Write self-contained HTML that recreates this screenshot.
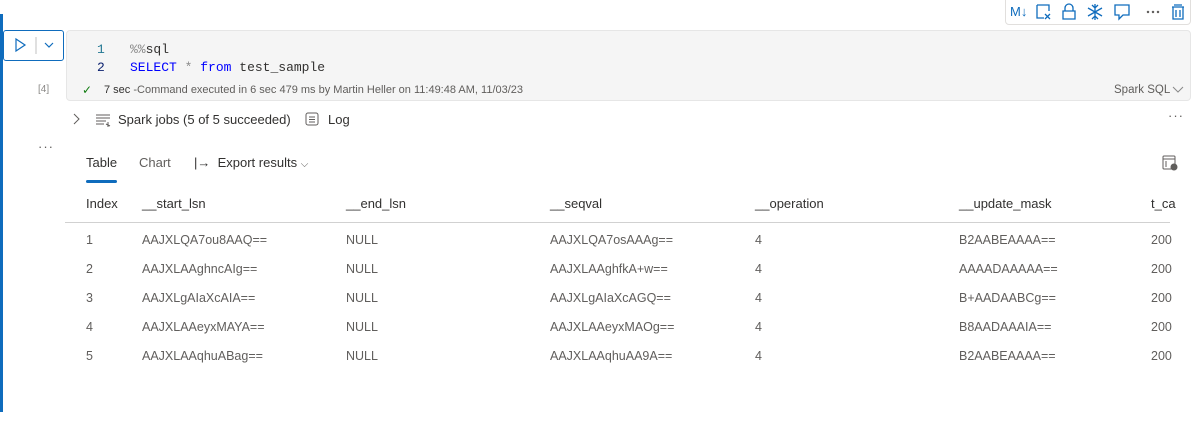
<!DOCTYPE html>
<html><head><meta charset="utf-8"><style>
*{margin:0;padding:0;box-sizing:border-box}
body{width:1200px;height:438px;background:#fff;font-family:"Liberation Sans",sans-serif;position:relative;overflow:hidden;color:#323130}
.a{position:absolute;white-space:nowrap}
.bar{left:0;top:14px;width:3px;height:398px;background:#0f6cbd}
.tb{left:1005px;top:-4px;width:186px;height:29px;border:1px solid #e1dfdd;border-radius:4px;background:#fff}
.run{left:3px;top:30px;width:61px;height:31px;border:1px solid #0f6cbd;border-radius:3px;background:#fff}
.cell{left:66px;top:30px;width:1125px;height:71px;background:#f5f5f5;border:1px solid #e6e6e6;border-radius:4px}
.mono{font-family:"Liberation Mono",monospace;font-size:13px}
.th{font-size:13px;color:#323130;top:196px}
.td{font-size:12.5px;color:#605e5c}
</style></head><body>
<div class="a bar"></div>
<div class="a tb"></div>
<div class="a" style="left:1010px;top:4px;font-size:13px;color:#0f6cbd">M↓</div>
<svg class="a" style="left:1036px;top:2px" width="150" height="20" fill="none" stroke="#0f6cbd" stroke-width="1.3">
<path d="M1 3h12v6M1 3v13h7M9 12l5 5M14 12l-5 5"/>
<path d="M29 9v-3a4 4 0 0 1 8 0v3M27 9h12v8h-12z"/>
<path d="M59 2v16M52 6l14 8M66 6l-14 8M56 3l3 3 3-3M56 17l3-3 3 3"/>
<path d="M79 3h14v10h-6l-4 4v-4h-4z"/>
<circle cx="112" cy="10" r=".6" fill="#605e5c" stroke="#605e5c"/><circle cx="117" cy="10" r=".6" fill="#605e5c" stroke="#605e5c"/><circle cx="122" cy="10" r=".6" fill="#605e5c" stroke="#605e5c"/>
<path d="M138 3h8M136 5h12M137 5v12h10V5M140 8v7M144 8v7"/>
</svg>
<div class="a run"></div>
<svg class="a" style="left:3px;top:30px" width="61" height="31" fill="none" stroke="#0f6cbd" stroke-width="1.2">
<path d="M13 9l9 6-9 6z"/><path d="M33 7v17" stroke="#ccc"/><path d="M42 13l4 4 4-4"/>
</svg>
<div class="a cell"></div>
<div class="a mono" style="left:97px;top:42px;color:#237893">1</div>
<div class="a mono" style="left:97px;top:60px;color:#0b216f">2</div>
<div class="a mono" style="left:130px;top:42px"><span style="color:#888">%%</span>sql</div>
<div class="a mono" style="left:130px;top:60px"><span style="color:#0000ff">SELECT</span> <span style="color:#888">*</span> <span style="color:#0000ff">from</span> test_sample</div>
<div class="a" style="left:38px;top:84px;font-size:10px;color:#8a8886">[4]</div>
<div class="a" style="left:82px;top:83px;font-size:12px;color:#107c10">✓</div>
<div class="a" style="left:104px;top:84px;font-size:11px;color:#605e5c"><span style="color:#323130">7 sec</span> -Command executed in 6 sec 479 ms by Martin Heller on 11:49:48 AM, 11/03/23</div>
<div class="a" style="left:1114px;top:84px;font-size:11.5px;color:#605e5c">Spark SQL</div>
<svg class="a" style="left:1172px;top:86px" width="12" height="8" fill="none" stroke="#888"><path d="M1 1l5 5 5-5"/></svg>
<svg class="a" style="left:72px;top:113px" width="10" height="12" fill="none" stroke="#605e5c"><path d="M2 1l5 5-5 5"/></svg>
<svg class="a" style="left:95px;top:113px" width="18" height="14" fill="none" stroke="#605e5c"><path d="M1 2h14M1 5h14M1 8h10M1 11h8M13 9v5M11 11l4 2"/></svg>
<div class="a" style="left:118px;top:112px;font-size:13px">Spark jobs (5 of 5 succeeded)</div>
<svg class="a" style="left:305px;top:112px" width="14" height="14" fill="none" stroke="#605e5c"><rect x="1" y="1" width="12" height="12" rx="2"/><path d="M4 5h6M4 7.5h6M4 10h6"/></svg>
<div class="a" style="left:328px;top:112px;font-size:13px">Log</div>
<div class="a" style="left:1168px;top:108px;font-size:13px;color:#605e5c;letter-spacing:1px">···</div>
<div class="a" style="left:38px;top:139px;font-size:13px;color:#605e5c;letter-spacing:1px">···</div>
<div class="a" style="left:86px;top:155px;font-size:13px">Table</div>
<div class="a" style="left:86px;top:180px;width:31px;height:3px;background:#0f6cbd;border-radius:2px"></div>
<div class="a" style="left:139px;top:155px;font-size:13px;color:#605e5c">Chart</div>
<div class="a" style="left:194px;top:155px;font-size:13px">|→&nbsp; Export results <span style="font-size:10px;color:#605e5c">⌵</span></div>
<svg class="a" style="left:1162px;top:155px" width="16" height="16" fill="none" stroke="#605e5c"><rect x="1" y="1" width="12" height="13" rx="1"/><path d="M1 4h12M4 6v6"/><circle cx="12" cy="12" r="3" fill="#605e5c"/></svg>
<div class="a th" style="left:86px">Index</div>
<div class="a th" style="left:142px">__start_lsn</div>
<div class="a th" style="left:346px">__end_lsn</div>
<div class="a th" style="left:550px">__seqval</div>
<div class="a th" style="left:755px">__operation</div>
<div class="a th" style="left:959px">__update_mask</div>
<div class="a th" style="left:1151px">t_ca</div>
<div class="a" style="left:65px;top:222px;width:1105px;height:1px;background:#d1d1d1"></div>
<div class="a" style="left:0;top:0;width:1200px">
<div class="a td" style="left:86px;top:233px">1</div><div class="a td" style="left:142px;top:233px">AAJXLQA7ou8AAQ==</div><div class="a td" style="left:346px;top:233px">NULL</div><div class="a td" style="left:550px;top:233px">AAJXLQA7osAAAg==</div><div class="a td" style="left:755px;top:233px">4</div><div class="a td" style="left:959px;top:233px">B2AABEAAAA==</div><div class="a td" style="left:1151px;top:233px">200</div>
<div class="a td" style="left:86px;top:262px">2</div><div class="a td" style="left:142px;top:262px">AAJXLAAghncAIg==</div><div class="a td" style="left:346px;top:262px">NULL</div><div class="a td" style="left:550px;top:262px">AAJXLAAghfkA+w==</div><div class="a td" style="left:755px;top:262px">4</div><div class="a td" style="left:959px;top:262px">AAAADAAAAA==</div><div class="a td" style="left:1151px;top:262px">200</div>
<div class="a td" style="left:86px;top:291px">3</div><div class="a td" style="left:142px;top:291px">AAJXLgAIaXcAIA==</div><div class="a td" style="left:346px;top:291px">NULL</div><div class="a td" style="left:550px;top:291px">AAJXLgAIaXcAGQ==</div><div class="a td" style="left:755px;top:291px">4</div><div class="a td" style="left:959px;top:291px">B+AADAABCg==</div><div class="a td" style="left:1151px;top:291px">200</div>
<div class="a td" style="left:86px;top:320px">4</div><div class="a td" style="left:142px;top:320px">AAJXLAAeyxMAYA==</div><div class="a td" style="left:346px;top:320px">NULL</div><div class="a td" style="left:550px;top:320px">AAJXLAAeyxMAOg==</div><div class="a td" style="left:755px;top:320px">4</div><div class="a td" style="left:959px;top:320px">B8AADAAAIA==</div><div class="a td" style="left:1151px;top:320px">200</div>
<div class="a td" style="left:86px;top:349px">5</div><div class="a td" style="left:142px;top:349px">AAJXLAAqhuABag==</div><div class="a td" style="left:346px;top:349px">NULL</div><div class="a td" style="left:550px;top:349px">AAJXLAAqhuAA9A==</div><div class="a td" style="left:755px;top:349px">4</div><div class="a td" style="left:959px;top:349px">B2AABEAAAA==</div><div class="a td" style="left:1151px;top:349px">200</div>
</div>
</body></html>
